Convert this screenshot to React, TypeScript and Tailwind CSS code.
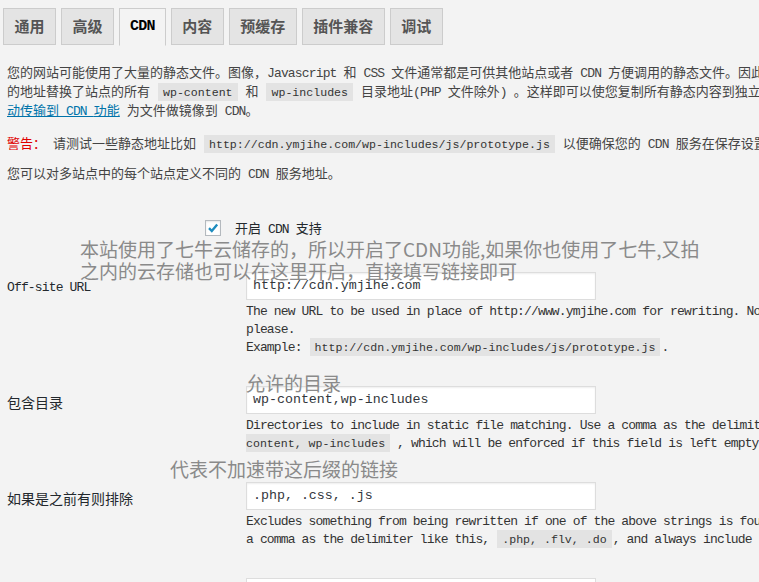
import React from "react";

const M: React.FC<{ children: React.ReactNode }> = ({ children }) => (
  <span className="font-['Liberation_Mono',monospace] tracking-[-0.85px] whitespace-pre">{children}</span>
);

const Code: React.FC<{ children: React.ReactNode }> = ({ children }) => (
  <code className="bg-[#e3e3e3] px-[5px] pt-[3px] pb-[2px] mx-px font-['Liberation_Mono',monospace] text-[11.6px] tracking-normal text-[#333]">
    {children}
  </code>
);

const tabs = ["通用", "高级", "CDN", "内容", "预缓存", "插件兼容", "调试"];

const Field: React.FC<{ label: React.ReactNode; value: string; children?: React.ReactNode }> = ({
  label,
  value,
  children,
}) => (
  <div className="flex pt-[15px] pb-[14px]">
    <div className="w-[246px] shrink-0 pl-[7px] h-[32px] flex items-center text-[#23282d]">{label}</div>
    <div className="shrink-0">
      <div className="w-[350px] h-[28px] border border-[#ddd] bg-white shadow-[inset_0_1px_2px_rgba(0,0,0,0.07)] pl-[6px] flex items-center font-['Liberation_Mono',monospace] text-[13.3px] text-[#32373c]">
        {value}
      </div>
      <div className="mt-[3px] whitespace-nowrap font-['Liberation_Mono',monospace] text-[13px] tracking-[-0.85px] text-[#333]">
        {children}
      </div>
    </div>
  </div>
);

const Line: React.FC<{ children: React.ReactNode }> = ({ children }) => (
  <div className="h-[18px] leading-[18px]">{children}</div>
);

export default function App() {
  return (
    <div className="relative w-[759px] h-[582px] overflow-hidden bg-[#f3f3f3] text-[#444] text-[13px] font-['Noto_Sans_CJK_SC',sans-serif]">
      {/* Tabs */}
      <div className="flex gap-[5px] pl-[3px] pt-[8px]">
        {tabs.map((t) => (
          <div
            key={t}
            className={`h-[37px] border border-[#ccc] flex items-center text-[15px] font-bold ${
              t === "CDN"
                ? "bg-[#f3f3f3] text-black h-[38px] px-[10px] border-b-[#f3f3f3] font-['Liberation_Mono',monospace] tracking-[-0.8px]"
                : "bg-[#e4e4e4] text-[#555] px-[10.5px]"
            }`}
          >
            {t}
          </div>
        ))}
      </div>

      {/* Intro */}
      <div className="pl-[7px] whitespace-nowrap">
        <div className="mt-[16px]">
          <div className="h-[19px] leading-[19px]">
            您的网站可能使用了大量的静态文件。图像，<M>Javascript </M>和<M> CSS </M>文件通常都是可供其他站点或者<M> CDN </M>
            方便调用的静态文件。因此，本插件用<M> CDN </M>的地址
          </div>
          <div className="h-[19px] leading-[19px]">
            的地址替换了站点的所有<M> </M>
            <Code>wp-content</Code>
            <M> </M>和<M> </M>
            <Code>wp-includes</Code>
            <M> </M>目录地址<M>(PHP </M>文件除外<M>) </M>。这样即可以使您复制所有静态内容到独立的主机上
          </div>
          <div className="h-[19px] leading-[19px]">
            <a className="text-[#0073aa] underline">
              动传输到<M> CDN </M>功能
            </a>
            <M> </M>为文件做镜像到<M> CDN</M>。
          </div>
        </div>
        <div className="mt-[14px] h-[19px] leading-[19px]">
          <span className="text-[#e00000]">警告：</span>
          <span className="ml-[7px]">请测试一些静态地址比如</span>
          <M> </M>
          <Code>http://cdn.ymjihe.com/wp-includes/js/prototype.js</Code>
          <M> </M>以便确保您的<M> CDN </M>服务在保存设置之前能正常工作。
        </div>
        <div className="mt-[11px] h-[19px] leading-[19px]">
          您可以对多站点中的每个站点定义不同的<M> CDN </M>服务地址。
        </div>
      </div>

      {/* Enable checkbox */}
      <div className="mt-[37px] pl-[205px] flex items-center h-[18px] leading-[19px] text-[#23282d]">
        <span className="w-[16px] h-[16px] border border-[#b4b9be] bg-white flex items-center justify-center shadow-[inset_0_1px_2px_rgba(0,0,0,0.1)]">
          <svg width="12" height="12" viewBox="0 0 12 12">
            <path d="M2 6.2 L4.8 9 L10.2 2.6" fill="none" stroke="#1e8cbe" strokeWidth="2.4" />
          </svg>
        </span>
        <span className="ml-[14px]">
          开启<M> CDN </M>支持
        </span>
      </div>

      {/* Fields */}
      <div className="mt-[20px]">
        <Field label={<M>Off-site URL</M>} value="http://cdn.ymjihe.com">
          <Line>The new URL to be used in place of http://www.ymjihe.com for rewriting. No trailing /</Line>
          <Line>please.</Line>
          <Line>
            Example: <Code>http://cdn.ymjihe.com/wp-includes/js/prototype.js</Code>.
          </Line>
        </Field>
        <Field label={<span className="text-[14px]">包含目录</span>} value="wp-content,wp-includes">
          <Line>
            Directories to include in static file matching. Use a comma as the delimiter. Default is <Code>wp-</Code>
          </Line>
          <Line>
            <code className="bg-[#e3e3e3] pr-[5px] pt-[3px] pb-[2px] font-['Liberation_Mono',monospace] text-[11.6px] tracking-normal text-[#333]">
              content, wp-includes
            </code>{" "}
            , which will be enforced if this field is left empty.
          </Line>
        </Field>
        <Field label={<span className="text-[14px]">如果是之前有则排除</span>} value=".php, .css, .js">
          <Line>Excludes something from being rewritten if one of the above strings is found in the match. Use</Line>
          <Line>
            a comma as the delimiter like this, <Code>.php, .flv, .do</Code>, and always include <Code>.php</Code> (default).
          </Line>
        </Field>
        <div className="mt-[15px] ml-[246px] w-[350px] h-[28px] border border-[#ddd] bg-white" />
      </div>

      {/* Annotations */}
      <div className="absolute z-10 left-[80px] top-[238px] text-[19px] leading-[22px] text-[#8a8a8a] whitespace-nowrap">
        <div>本站使用了七牛云储存的，所以开启了CDN功能,如果你也使用了七牛,又拍</div>
        <div>之内的云存储也可以在这里开启，直接填写链接即可</div>
      </div>
      <div className="absolute z-10 left-[246px] top-[372px] text-[19px] leading-[22px] text-[#8a8a8a]">允许的目录</div>
      <div className="absolute z-10 left-[170px] top-[458px] text-[19px] leading-[22px] text-[#8a8a8a]">
        代表不加速带这后缀的链接
      </div>
    </div>
  );
}
